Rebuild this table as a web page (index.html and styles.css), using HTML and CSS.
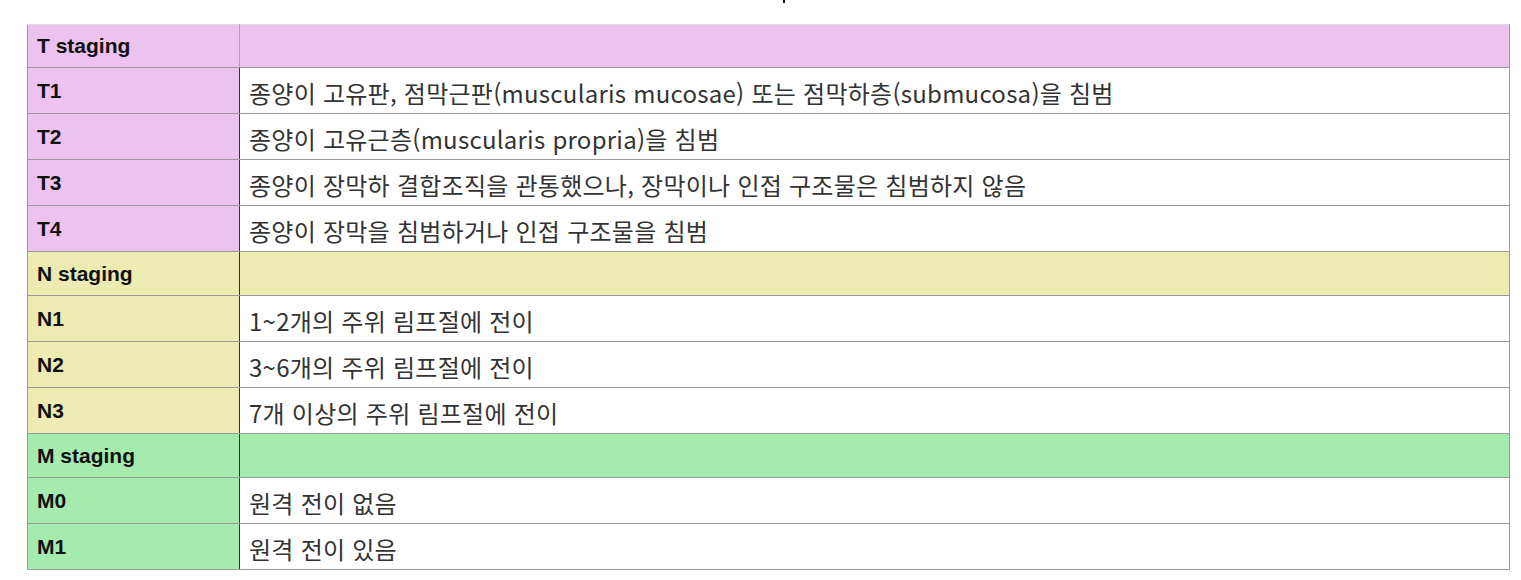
FILE: index.html
```html
<!DOCTYPE html>
<html lang="ko">
<head>
<meta charset="utf-8">
<link rel="stylesheet" href="styles.css">
</head>
<body>
<div class="page">
  <span class="cut-mark"></span>
  <table class="staging">
    <colgroup><col class="c1"><col class="c2"></colgroup>
    <tr class="head t first-row"><td class="lbl">T staging</td><td class="blank light"></td></tr>
    <tr class="row"><td class="lbl t">T1</td><td class="desc">종양이 고유판, 점막근판(muscularis mucosae) 또는 점막하층(submucosa)을 침범</td></tr>
    <tr class="row"><td class="lbl t">T2</td><td class="desc">종양이 고유근층(muscularis propria)을 침범</td></tr>
    <tr class="row"><td class="lbl t">T3</td><td class="desc">종양이 장막하 결합조직을 관통했으나, 장막이나 인접 구조물은 침범하지 않음</td></tr>
    <tr class="row"><td class="lbl t">T4</td><td class="desc">종양이 장막을 침범하거나 인접 구조물을 침범</td></tr>
    <tr class="head n"><td class="lbl">N staging</td><td class="blank"></td></tr>
    <tr class="row"><td class="lbl n">N1</td><td class="desc">1~2개의 주위 림프절에 전이</td></tr>
    <tr class="row"><td class="lbl n">N2</td><td class="desc">3~6개의 주위 림프절에 전이</td></tr>
    <tr class="row"><td class="lbl n">N3</td><td class="desc">7개 이상의 주위 림프절에 전이</td></tr>
    <tr class="head m"><td class="lbl">M staging</td><td class="blank"></td></tr>
    <tr class="row"><td class="lbl m">M0</td><td class="desc">원격 전이 없음</td></tr>
    <tr class="row"><td class="lbl m">M1</td><td class="desc">원격 전이 있음</td></tr>
  </table>
</div>
</body>
</html>
```

FILE: styles.css
```css
html, body {
  margin: 0;
  padding: 0;
  background: #ffffff;
}
.page {
  position: relative;
  padding: 24px 0 0 27px;
}
.cut-mark {
  position: absolute;
  left: 783px;
  top: 0;
  width: 2px;
  height: 3px;
  background: #111;
}
.staging {
  border-collapse: collapse;
  width: 1483px;
  table-layout: fixed;
  font-family: "Liberation Sans", Arial, sans-serif;
  border-top: 1px solid #dcdcdc;
  border-left: 1px solid #9a9a9a;
  border-right: 1px solid #9a9a9a;
  border-bottom: 1px solid #9a9a9a;
}
.c1 { width: 212px; }
.staging td {
  padding: 0 9px;
  border-bottom: 1px solid #9a9a9a;
  vertical-align: middle;
}
.head td { height: 43px; }
.head.first-row td { height: 42px; }
.row td { height: 41px; }
.head.t { background: #ecc2ee; }
.head.n { background: #ebebb2; }
.head.m { background: #a5ebad; }
.lbl {
  font-weight: bold;
  font-size: 21px;
  color: #111;
}
.lbl.t { background: #ecc2ee; }
.lbl.n { background: #ebebb2; }
.lbl.m { background: #a5ebad; }
.blank {
  border-left: 1px solid #333333;
}
.blank.light {
  border-left: 1px solid #a8a8a8;
}
.staging td.desc {
  border-left: 1px solid #333333;
  font-family: "Noto Sans CJK KR", "Noto Sans", sans-serif;
  font-size: 24px;
  letter-spacing: 0.25px;
  color: #333333;
  padding-top: 4px;
  background: #ffffff;
}
```
